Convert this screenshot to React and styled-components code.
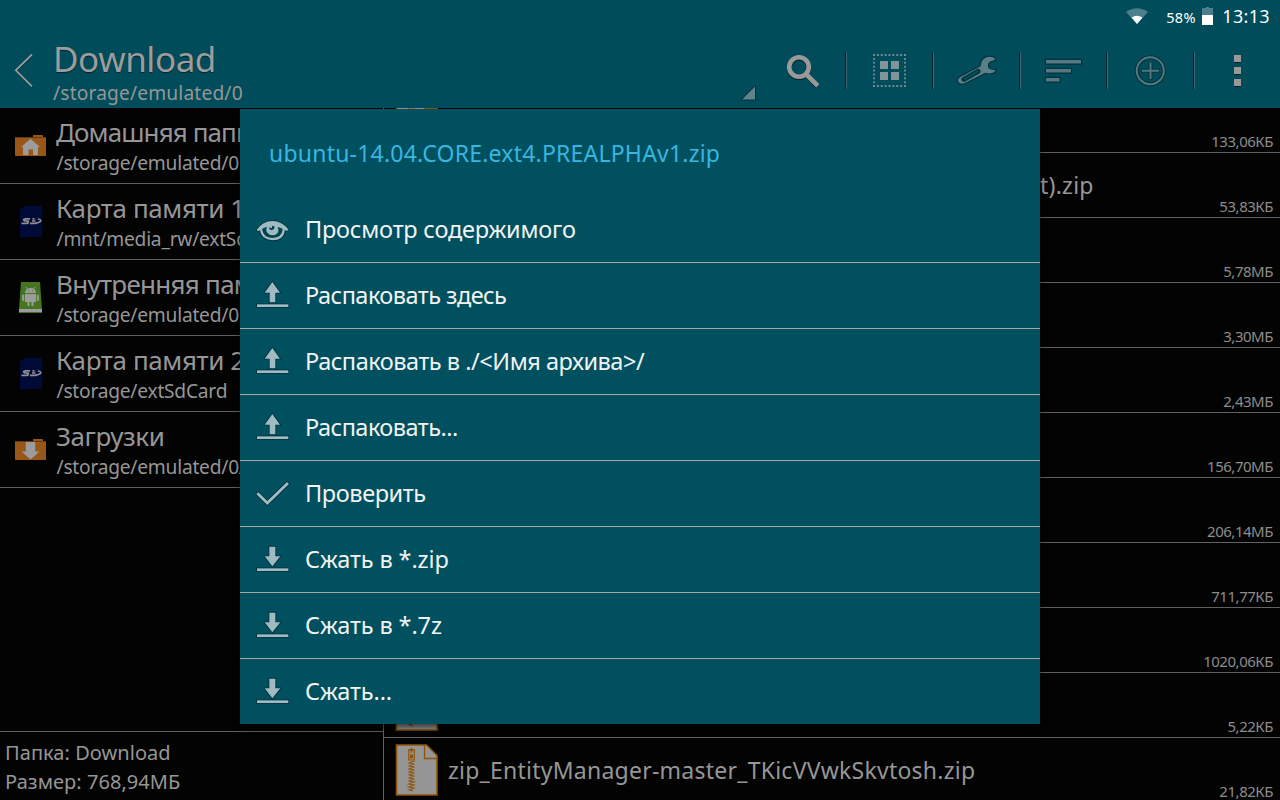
import React from 'react';
import styled, { createGlobalStyle } from 'styled-components';

const GlobalStyle = createGlobalStyle`
  * { box-sizing: border-box; }
  body { margin: 0; background: #030303; }
`;

const Screen = styled.div`
  position: relative;
  width: 1280px;
  height: 800px;
  overflow: hidden;
  display: flex;
  flex-direction: column;
  background: #030303;
  color: #969696;
  font-family: 'Noto Sans', sans-serif;
  white-space: pre;
`;

const StatusBar = styled.header`
  height: 32px;
  flex: none;
  display: flex;
  justify-content: flex-end;
  align-items: center;
  padding-right: 10px;
  background: #004c5a;
  color: #fff;
  svg { display: block; flex: none; }
`;

const BatteryLevel = styled.span`
  width: 31px;
  margin: 1px 5px 0 17px;
  font-size: 14.5px;
  line-height: 30px;
  letter-spacing: 0.3px;
`;

const Clock = styled.time`
  margin-left: 9px;
  font-size: 18px;
  line-height: 32px;
  letter-spacing: 0.35px;
`;

const ActionBar = styled.nav`
  height: 76px;
  flex: none;
  display: flex;
  background: #004c5a;
`;

const BackButton = styled.div`
  width: 52px;
  padding: 20px 0 0 13px;
  svg { display: block; }
`;

const Location = styled.div`
  width: 706px;
  display: flex;
  justify-content: space-between;
`;

const FolderTitle = styled.h1`
  margin: 8px 0 0 1px;
  font-size: 35px;
  line-height: 37px;
  font-weight: 400;
  letter-spacing: -0.45px;
  color: #9c9c9c;
  text-shadow: 0 1px 1px #00252c;
`;

const FolderPath = styled.div`
  padding-left: 1px;
  font-size: 19.2px;
  line-height: 31px;
  letter-spacing: 0.15px;
`;

const SpinnerMark = styled.svg`
  display: block;
  margin: 53px 1px 0 0;
`;

const ActionButton = styled.div`
  width: 87px;
  display: flex;
  align-items: center;
`;

const Divider = styled.i`
  width: 2px;
  height: 37px;
  flex: none;
  background: ${(p) => (p.$hidden ? 'none' : 'linear-gradient(90deg, #00222a 50%, #41666f 50%)')};
`;

const ActionIcon = styled.svg`
  display: block;
  margin: 0 20px;
  flex: none;
`;

const Body = styled.main`
  flex: 1;
  min-height: 0;
  display: flex;
`;

const Sidebar = styled.aside`
  width: 384px;
  border-right: 1px solid #626262;
  display: flex;
  flex-direction: column;
`;

const Place = styled.div`
  height: 76px;
  display: flex;
  padding: 8px 0 0 15px;
  border-bottom: 1px solid #626262;
  overflow: hidden;
`;

const PlaceIcon = styled.svg`
  display: block;
  margin: 14px 10px 0 0;
  flex: none;
`;

const PlaceName = styled.div`
  font-size: 26px;
  line-height: 32px;
  letter-spacing: ${(p) => p.$spacing}px;
`;

const PlacePath = styled.div`
  padding-left: 0.5px;
  font-size: 19.2px;
  line-height: 30px;
  letter-spacing: ${(p) => p.$spacing || 0}px;
`;

const FolderInfo = styled.footer`
  height: 69px;
  margin-top: auto;
  padding: 6px 0 0 5px;
  border-top: 1px solid #626262;
  font-size: 20px;
  line-height: 29px;
  letter-spacing: 0.05px;
`;

const FileList = styled.section`
  flex: 1;
  overflow: hidden;
`;

const FileScroller = styled.div`
  margin-top: -20px;
`;

const FileRow = styled.div`
  height: 65px;
  display: flex;
  align-items: center;
  padding: 0 7px 0 11px;
  border-bottom: 1px solid #626262;
`;

const FileIcon = styled.svg`
  display: block;
  flex: none;
`;

const FileName = styled.span`
  padding-left: ${(p) => p.$lead || 10}px;
  font-size: 23px;
  line-height: 64px;
  letter-spacing: 0.24px;
`;

const FileSize = styled.span`
  align-self: flex-end;
  margin-left: auto;
  font-size: 15px;
  line-height: 21px;
  letter-spacing: -0.47px;
  color: #8c8c8c;
`;

const Dialog = styled.div`
  position: absolute;
  left: 240px;
  top: 109px;
  width: 800px;
  background: #00505f;
  box-shadow: 0 5px 8px -2px rgba(0, 0, 0, 0.7);
`;

const DialogTitle = styled.h2`
  margin: 0;
  height: 88px;
  padding-left: 29px;
  font-size: 23px;
  line-height: 88px;
  font-weight: 400;
  letter-spacing: 0.21px;
  color: #39b6e0;
`;

const MenuItem = styled.div`
  height: 66px;
  display: flex;
  align-items: center;
  padding-left: 16px;
  border-bottom: 1px solid #a8a8a8;
  &:last-child { height: 65px; border-bottom: 0; }
`;

const MenuIcon = styled.svg`
  display: block;
  flex: none;
  margin-right: 15px;
  fill: #9fbac1;
  stroke: #00323d;
  stroke-width: 5;
  paint-order: stroke;
`;

const MenuLabel = styled.span`
  padding-bottom: 2px;
  font-size: 23.5px;
  line-height: 62px;
  letter-spacing: ${(p) => p.$spacing}px;
  color: #f3f3f3;
`;

const menuShapes = {
  eye: (
    <>
      <path d="M50 330Q68 303 97 303Q126 303 146 329Q141 334 134 331Q132 361 97 361Q63 359 60 331Q54 335 50 330Z" />
      <path d="M66 327Q73 322 81 320Q76 330 82 338Q88 346 99 346Q112 345 115 334Q116 327 113 321Q121 323 128 327Q126 353 97 354Q70 353 66 327Z" fill="#00424f" stroke="none" />
      <path d="M95 317L103 319Q105 324 101 328Q95 333 89 328Q86 325 87 322Q92 326 96 323Q97 320 95 317Z" fill="#00424f" stroke="none" />
    </>
  ),
  unpack: (
    <>
      <path d="M97 288L120 320H106V349H89V320H74Z" />
      <path d="M51 355H145V363H51Z" />
    </>
  ),
  check: (
    <path d="M49 331L55 325L82 351L141 294L147 300L82 363Z" />
  ),
  pack: (
    <>
      <path d="M88 290H106V319H121L97 349L74 319H88Z" />
      <path d="M51 355H145V363H51Z" />
    </>
  ),
};

const menu = [
  { icon: 'eye', label: 'Просмотр содержимого', spacing: -0.2 },
  { icon: 'unpack', label: 'Распаковать здесь', spacing: -0.54 },
  { icon: 'unpack', label: 'Распаковать в ./<Имя архива>/', spacing: -0.47 },
  { icon: 'unpack', label: 'Распаковать...', spacing: -0.54 },
  { icon: 'check', label: 'Проверить', spacing: -0.4 },
  { icon: 'pack', label: 'Сжать в *.zip', spacing: -0.11 },
  { icon: 'pack', label: 'Сжать в *.7z', spacing: -0.11 },
  { icon: 'pack', label: 'Сжать...', spacing: -0.1 },
];

const folder = (
  <>
    <path d="M18 7V5.500Q18 5 18.500 5H27Q28 5 28 6V7H30Q31 7 31 8V25Q31 26 30 26H1Q0 26 0 25V7Z" fill="#985718" />
    <path d="M0 7.500H31" stroke="#6b3a0c" />
  </>
);

const sdCard = (
  <>
    <path d="M5 4L9 0H26Q27 0 27 1V31H5Z" fill="#000a36" />
    <path d="M15 12.800H10.500Q7.500 13.300 9.300 14.600L13.300 15.200Q14 17 11.500 17.300H6.500" fill="none" stroke="#8f8f98" strokeWidth="1.700" />
    <path d="M15 17.300H20Q25.500 16.500 25.800 14.600Q25.500 13.300 23 13M17 15H20.500M17.500 12.800H19.500" fill="none" stroke="#8f8f98" strokeWidth="1.700" />
  </>
);

const placeShapes = {
  home: (
    <>
      {folder}
      <path d="M15.500 8.700L25 17H23V25H18V19.500H13.500V25H8V17H6Z" fill="#9c9c9c" />
    </>
  ),
  downloads: (
    <>
      {folder}
      <path d="M10.800 8H20.200V17.500H24.500L15.500 25.500L6.500 17.500H10.800Z" fill="#9c9c9c" />
    </>
  ),
  sd: sdCard,
  android: (
    <>
      <path d="M6 0H25L27 27H4Z" fill="#457520" />
      <path d="M4 27H27V30Q27 31 26 31H5Q4 31 4 30Z" fill="#9c9c9c" />
      <path d="M4 30.500H27" stroke="#47731f" />
      <path d="M11 5L12.500 7M20 5L18.500 7" stroke="#9c9c9c" />
      <path d="M10 11Q10.500 6 15.500 6Q20.500 6 21 11Z" fill="#9c9c9c" />
      <path d="M10 12H21V20H18.500V24H16.500V20H14.500V24H12.500V20H10Z" fill="#9c9c9c" />
      <path d="M8.200 13.500V18M22.800 13.500V18" stroke="#9c9c9c" strokeWidth="2" strokeLinecap="round" />
      <path d="M13 8.800H14M17 8.800H18" stroke="#457520" />
    </>
  ),
};

const places = [
  { icon: 'home', name: 'Домашняя папка', path: '/storage/emulated/0', spacing: -0.9 },
  { icon: 'sd', name: 'Карта памяти 1', path: '/mnt/media_rw/extSdCard', spacing: -0.4 },
  { icon: 'android', name: 'Внутренняя память', path: '/storage/emulated/0', spacing: -0.72 },
  { icon: 'sd', name: 'Карта памяти 2', path: '/storage/extSdCard', spacing: -0.4 },
  { icon: 'downloads', name: 'Загрузки', path: '/storage/emulated/0/Download', spacing: -0.42 },
];

const files = [
  { size: '133,06КБ' },
  { size: '53,83КБ', name: 't).zip', lead: 602 },
  { size: '5,78МБ' },
  { size: '3,30МБ' },
  { size: '2,43МБ' },
  { size: '156,70МБ' },
  { size: '206,14МБ' },
  { size: '711,77КБ' },
  { size: '1020,06КБ' },
  { size: '5,22КБ' },
  { size: '21,82КБ', name: 'zip_EntityManager-master_TKicVVwkSkvtosh.zip' },
];

const ZipIcon = () => (
  <FileIcon width="43" height="52" viewBox="0 0 43 52">
    <path d="M1.500 1H31.500L42 11.500V51H1.500Z" fill="#959595" stroke="#8f5409" strokeWidth="1.600" />
    <path d="M29.500 1V14.500H42" fill="none" stroke="#8f5409" strokeWidth="1.300" />
    <path d="M13.800 5.500H19.300V16H13.800Z" fill="none" stroke="#8f5409" strokeWidth="1.200" />
    <path d="M16.500 3.500V9M14.500 6.500H18.500" stroke="#8f5409" strokeWidth="1.200" />
    <path d="M15 10.500H18V14.500H15Z" fill="#8f5409" />
    <path d="M19.500 17L13.500 19L19.500 20L13.500 22L19.500 23L13.500 25L19.500 26L13.500 28L19.500 29L13.500 31L19.500 32L13.500 34L19.500 35L13.500 37L19 38L13.500 40L19 41L13.500 43L19 44L14 46L18 47" fill="none" stroke="#8f5409" strokeWidth="1.100" />
  </FileIcon>
);

const actions = [
  {
    x: 780,
    art: (
      <>
        <g fill="none" stroke="#002a33" strokeWidth="4.600" transform="translate(0 1.200)">
          <circle cx="799" cy="67" r="9.800" /><path d="M805.500 73.500L817.500 85.500" />
        </g>
        <g fill="none" stroke="#999" strokeWidth="4.600">
          <circle cx="799" cy="67" r="9.800" /><path d="M805.500 73.500L817.800 85.800" />
        </g>
      </>
    ),
  },
  {
    x: 867,
    art: (
      <>
        <path d="M873 55H906M873 86H906M874 54V87M905 54V87" fill="none" stroke="#73898f" strokeWidth="1.800" strokeDasharray="2 1.875" />
        <path d="M880 61h8v8h-8zM891 61h8v8h-8zM880 72h8v8h-8zM891 72h8v8h-8z" fill="#80949a" />
      </>
    ),
  },
  {
    x: 954,
    art: (
      <g transform="translate(720 0) scale(.3333)">
        <path d="M825 178L820 172Q806 168 796 173Q783 180 782 199L720 232Q712 237 715 245Q722 255 735 249L796 218Q812 223 822 217L827 210Q813 211 806 205Q801 195 806 188Q812 182 825 180Z" fill="#5c7f87" stroke="#00333d" strokeWidth="7" paintOrder="stroke" strokeLinejoin="round" />
        <path d="M732 238L774 214" stroke="#00333d" strokeWidth="15" strokeLinecap="round" />
        <path d="M734 237L773 214" stroke="#07505d" strokeWidth="6" strokeLinecap="round" />
      </g>
    ),
  },
  {
    x: 1041,
    art: (
      <path d="M1046 60h35v3.500h-35zM1046 69h25v3.500h-25zM1046 78h13.500v3.500h-13.500z" fill="#557881" stroke="#00333d" strokeWidth="2.400" paintOrder="stroke" strokeLinejoin="round" />
    ),
  },
  {
    x: 1128,
    art: (
      <>
        <g fill="none" stroke="#00333d" strokeWidth="4">
          <circle cx="1150.300" cy="70.700" r="13.500" /><path d="M1141.500 70.700H1159.500M1150.500 62V79.500" />
        </g>
        <g fill="none" stroke="#55787f" strokeWidth="2">
          <circle cx="1150.300" cy="70.700" r="13.500" /><path d="M1142 70.700H1159M1150.500 62.500V79" />
        </g>
      </>
    ),
  },
  {
    x: 1215,
    art: (
      <>
        <path d="M1234 56h7v7h-7zM1234 68h7v7h-7zM1234 80h7v7h-7z" fill="#00222a" />
        <path d="M1234 55h7v7h-7zM1234 67h7v7h-7zM1234 79h7v7h-7z" fill="#999" />
      </>
    ),
  },
];

export default function App() {
  return (
    <Screen>
      <GlobalStyle />
      <StatusBar>
        <svg width="24" height="18" viewBox="0 0 24 18">
          <path d="M12 17L1 5Q12 -2.500 23 5Z" fill="#4a7f8b" />
          <path d="M12 17L6.500 10.500Q12 6.800 17.500 10.500Z" fill="#fff" />
        </svg>
        <BatteryLevel>58%</BatteryLevel>
        <svg width="11" height="18" viewBox="0 0 11 18">
          <path d="M0 1H4V0H7V1H11V8H0Z" fill="#4a7f8b" />
          <path d="M0 8H11V18H0Z" fill="#fff" />
        </svg>
        <Clock>13:13</Clock>
      </StatusBar>

      <ActionBar>
        <BackButton>
          <svg width="22" height="38" viewBox="13 52 22 38" fill="none">
            <path d="M32.500 55.500L16.500 71.300L32.500 87.300" stroke="#00333d" strokeWidth="1.500" />
            <path d="M32 54.500L15.800 70.300L32 86.300" stroke="#999" strokeWidth="1.800" />
          </svg>
        </BackButton>
        <Location>
          <div>
            <FolderTitle>Download</FolderTitle>
            <FolderPath>/storage/emulated/0</FolderPath>
          </div>
          <SpinnerMark width="16" height="17" viewBox="741 85 16 17">
            <path d="M742 99.500L755 86.500V99.500Z" fill="#5f848c" stroke="#00333d" strokeWidth="2" paintOrder="stroke" strokeLinejoin="round" />
          </SpinnerMark>
        </Location>
        {actions.map((a, i) => (
          <ActionButton key={a.x}>
            <Divider $hidden={i === 0} />
            <ActionIcon width="45" height="44" viewBox={`${a.x} 48 45 44`}>{a.art}</ActionIcon>
          </ActionButton>
        ))}
      </ActionBar>

      <Body>
        <Sidebar>
          {places.map((p) => (
            <Place key={p.name}>
              <PlaceIcon width="31" height="32" viewBox="0 0 31 32">{placeShapes[p.icon]}</PlaceIcon>
              <div>
                <PlaceName $spacing={p.spacing}>{p.name}</PlaceName>
                <PlacePath $spacing={-0.24}>{p.path}</PlacePath>
              </div>
            </Place>
          ))}
          <FolderInfo>
            <div>Папка: Download</div>
            <div>Размер: 768,94МБ</div>
          </FolderInfo>
        </Sidebar>
        <FileList>
          <FileScroller>
            {files.map((f) => (
              <FileRow key={f.size}>
                <ZipIcon />
                {f.name && <FileName $lead={f.lead}>{f.name}</FileName>}
                <FileSize>{f.size}</FileSize>
              </FileRow>
            ))}
          </FileScroller>
        </FileList>
      </Body>

      <Dialog>
        <DialogTitle>ubuntu-14.04.CORE.ext4.PREALPHAv1.zip</DialogTitle>
        {menu.map((m) => (
          <MenuItem key={m.label}>
            <MenuIcon width="34" height="33" viewBox="48 279 102 99">{menuShapes[m.icon]}</MenuIcon>
            <MenuLabel $spacing={m.spacing}>{m.label}</MenuLabel>
          </MenuItem>
        ))}
      </Dialog>
    </Screen>
  );
}
